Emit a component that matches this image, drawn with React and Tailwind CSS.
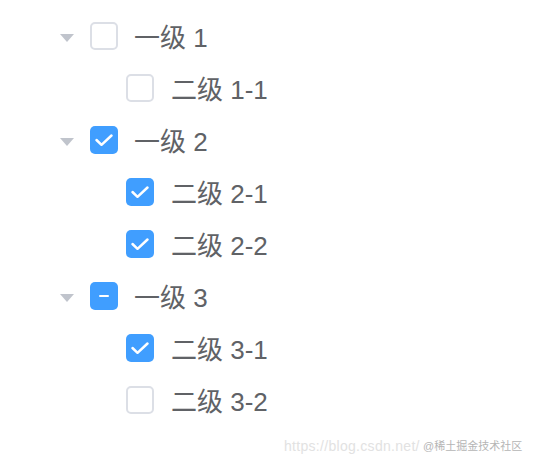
import React from 'react';

const tree = [
  { label: '一级 1', state: 'none', children: [{ label: '二级 1-1', checked: false }] },
  {
    label: '一级 2',
    state: 'all',
    children: [
      { label: '二级 2-1', checked: true },
      { label: '二级 2-2', checked: true },
    ],
  },
  {
    label: '一级 3',
    state: 'some',
    children: [
      { label: '二级 3-1', checked: true },
      { label: '二级 3-2', checked: false },
    ],
  },
];

const Checkbox = ({ state }) => {
  if (state === 'all') {
    return (
      <span className="flex h-[28px] w-[28px] shrink-0 items-center justify-center rounded-[5px] bg-[#409eff]">
        <svg width="28" height="28" viewBox="0 0 28 28">
          <path d="M6.5 14 L11.5 18.8 L21.5 9.5" fill="none" stroke="#fff" strokeWidth="2.5" strokeLinecap="round" strokeLinejoin="round" />
        </svg>
      </span>
    );
  }
  if (state === 'some') {
    return (
      <span className="flex h-[28px] w-[28px] shrink-0 items-center justify-center rounded-[5px] bg-[#409eff]">
        <span className="h-[2.5px] w-[10px] rounded-full bg-white" />
      </span>
    );
  }
  return <span className="block h-[28px] w-[28px] shrink-0 rounded-[5px] border-2 border-[#dcdfe6] bg-white" />;
};

const Caret = () => (
  <svg width="14" height="8" viewBox="0 0 14 8" className="mt-[4px] mr-[16px] shrink-0">
    <polygon points="0,0 14,0 7,8" fill="#c0c4cc" />
  </svg>
);

export default function App() {
  return (
    <div
      className="h-[464px] w-[536px] bg-white pl-[60px] pt-[10px] text-[#606266]"
      style={{ fontFamily: '"Liberation Sans", "Noto Sans CJK SC", sans-serif' }}
    >
      {tree.map((node) => (
        <div key={node.label}>
          <div className="flex h-[52px] items-center">
            <Caret />
            <Checkbox state={node.state} />
            <span className="ml-[16px] mt-[3px] text-[26px] leading-none">{node.label}</span>
          </div>
          {node.children.map((child) => (
            <div key={child.label} className="flex h-[52px] items-center pl-[66px]">
              <Checkbox state={child.checked ? 'all' : 'none'} />
              <span className="ml-[17px] mt-[3px] text-[26px] leading-none">{child.label}</span>
            </div>
          ))}
        </div>
      ))}

      {/* watermark */}
      <div className="relative mt-[8px] h-[30px]">
        <span className="absolute left-[224px] top-[2px] text-[14px] tracking-[0.3px] text-[#e2e2e2]">
          https://blog.csdn.net/
        </span>
        <span className="absolute left-[363px] top-[4px] text-[11px] text-[#b5b5b5]">@稀土掘金技术社区</span>
      </div>
    </div>
  );
}
